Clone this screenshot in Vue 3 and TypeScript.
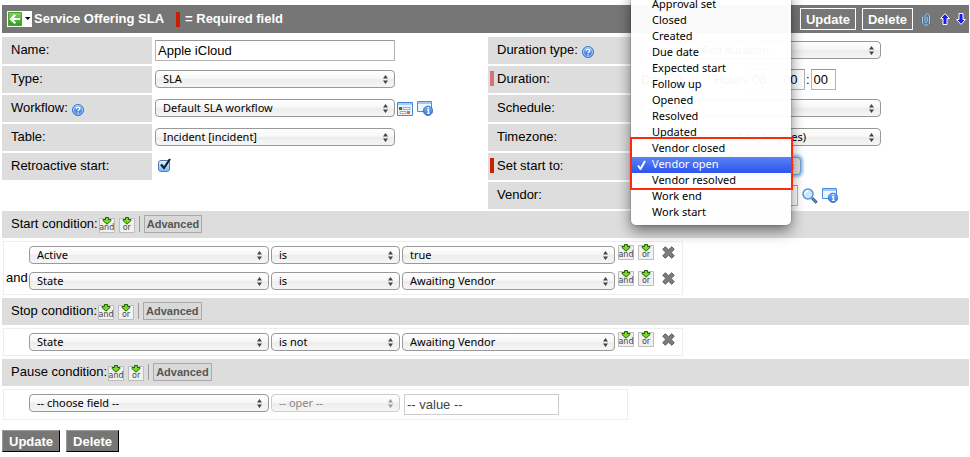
<script setup lang="ts">
import { ref } from 'vue'

interface Condition {
  join: string
  field: string
  oper: string
  value: string
}

interface Section {
  id: string
  title: string
  rows: Condition[]
}

const name = ref('Apple iCloud')
const retroactive = ref(true)
const days = ref('0')
const hours = ref('08')
const minutes = ref('00')
const seconds = ref('00')
const vendor = ref('')
const blankValue = ref('-- value --')
const startTo = ref('Vendor open')

const startOptions: string[] = [
  'Approval set',
  'Closed',
  'Created',
  'Due date',
  'Expected start',
  'Follow up',
  'Opened',
  'Resolved',
  'Updated',
  'Vendor closed',
  'Vendor open',
  'Vendor resolved',
  'Work end',
  'Work start',
]

const sections: Section[] = [
  {
    id: 'start',
    title: 'Start condition:',
    rows: [
      { join: '', field: 'Active', oper: 'is', value: 'true' },
      { join: 'and', field: 'State', oper: 'is', value: 'Awaiting Vendor' },
    ],
  },
  {
    id: 'stop',
    title: 'Stop condition:',
    rows: [{ join: '', field: 'State', oper: 'is not', value: 'Awaiting Vendor' }],
  },
  { id: 'pause', title: 'Pause condition:', rows: [] },
]
</script>

<template>
  <svg class="defs" aria-hidden="true">
    <defs>
      <linearGradient id="g-green" x1="0" y1="0" x2="0" y2="1">
        <stop offset="0" stop-color="#7fd35c" />
        <stop offset="1" stop-color="#2f9e1c" />
      </linearGradient>
      <linearGradient id="g-blue" x1="0" y1="0" x2="0" y2="1">
        <stop offset="0" stop-color="#7db8f5" />
        <stop offset="1" stop-color="#2b6fd8" />
      </linearGradient>
      <symbol id="i-updown" viewBox="0 0 5 9">
        <path d="M2.5 0 5 3.5H0zM2.5 9 0 5.5h5z" fill="currentColor" />
      </symbol>
      <symbol id="i-add" viewBox="0 0 16 16">
        <path d="M.5 1.500h15v14H.5z" fill="#f1f1f1" stroke="#bdbdbd" />
        <path d="M6.500 .5h3v2h2.500v1L8 7.200 4 3.500V2.500h2.500z" fill="#74dc1c" stroke="#235c0c" />
      </symbol>
      <symbol id="i-help" viewBox="0 0 12 12">
        <circle cx="6" cy="6" r="5.500" fill="url(#g-blue)" stroke="#3a74cc" />
        <circle cx="6" cy="6" r="4.500" fill="none" stroke="#b9dcfb" stroke-width=".8" />
        <path d="M4.200 4.700C4.200 2.500 7.900 2.500 7.900 4.600 7.900 5.900 6.100 5.800 6.100 7.300M6.100 8.300v1.300" fill="none" stroke="#fff" stroke-width="1.300" />
      </symbol>
      <symbol id="i-form" viewBox="0 0 16 14">
        <path d="M.5.5h15v13H.5z" fill="#eef5fd" stroke="#3f86dc" />
        <path d="M1 1h14v2H1z" fill="#a9cdf5" />
        <path d="M2 5h3v3H2z" fill="#1e8a1e" />
        <path d="M6 5.500h7v2H6zM3 9.500h6v2H3z" fill="#fff" stroke="#9ab" />
        <path d="M10 9h3v3h-3z" fill="#ff6a00" />
      </symbol>
      <symbol id="i-info" viewBox="0 0 16 15">
        <path d="M.5.5h14v10H.5z" fill="#eef5fd" stroke="#4a8cdf" />
        <path d="M1 1h13v2H1z" fill="#a3c8f4" />
        <circle cx="11" cy="9.800" r="4.700" fill="url(#g-blue)" stroke="#2a66c8" stroke-width=".8" />
        <path d="M10 9h1.500v3M9.800 12.300h3M10.600 6.700h1.300" fill="none" stroke="#fff" stroke-width="1.300" />
      </symbol>
      <symbol id="i-search" viewBox="0 0 16 16">
        <path d="M10 10l4.700 4.700" stroke="#32618f" stroke-width="3" />
        <path d="M10.500 10.500l3.700 3.700" stroke="#7fa9d2" stroke-width="1" />
        <circle cx="6" cy="6" r="5" fill="#c9e8fc" stroke="#5a93cf" stroke-width="1.500" />
        <path d="M3 6a3 3 0 0 1 3-3" fill="none" stroke="#fff" stroke-width="1.500" />
      </symbol>
      <symbol id="i-cross" viewBox="0 0 12 12">
        <path d="M3 .7 6 3.500 9 .7 11.300 3 8.500 6l2.800 3L9 11.300 6 8.500 3 11.300.7 9l2.800-3L.7 3z" fill="#7c7c7c" stroke="#5c5c5c" stroke-width=".9" />
      </symbol>
      <symbol id="i-clip" viewBox="0 0 10 13">
        <path d="M1.500 3.500v5.500c0 4.300 7 4.300 7 0V3C8.500 0 4 0 4 3v5.500c0 1.600 2.200 1.600 2.200 0V4" fill="none" stroke="#3f6d92" stroke-width="1.800" />
        <path d="M1.500 3.500v5.500c0 4.300 7 4.300 7 0V3C8.500 0 4 0 4 3v5.500c0 1.600 2.200 1.600 2.200 0V4" fill="none" stroke="#a9d2ee" stroke-width="1" />
      </symbol>
      <symbol id="i-arrow" viewBox="0 0 10 12">
        <path d="M5 .6 9.400 5.500H7v6H3v-6H.6z" fill="#1c1cf0" stroke="#fff" />
      </symbol>
    </defs>
  </svg>

  <main class="page">
    <header class="bar">
      <button class="back" type="button" aria-label="Back">
        <svg class="back-icon" viewBox="0 0 25 16">
          <path d="M1.500 1.500h13v13h-13z" fill="url(#g-green)" stroke="#42a52c" />
          <path d="M13 8H4.500M8.300 3.800 4 8l4.300 4.200" fill="none" stroke="#fff" stroke-width="2.200" />
          <path d="M18 6h5.500l-2.750 3z" fill="#000" />
        </svg>
      </button>
      <h1 class="title">Service Offering SLA</h1>
      <span class="mark"></span>
      <span class="required">= Required field</span>
      <div class="actions">
        <button class="outline" type="button">Update</button>
        <button class="outline" type="button">Delete</button>
        <button class="icon-btn clip" type="button" aria-label="Attachments">
          <svg width="10" height="13"><use href="#i-clip" /></svg>
        </button>
        <button class="icon-btn" type="button" aria-label="Previous">
          <svg width="10" height="12"><use href="#i-arrow" /></svg>
        </button>
        <button class="icon-btn down" type="button" aria-label="Next">
          <svg width="10" height="12"><use href="#i-arrow" /></svg>
        </button>
      </div>
    </header>

    <div class="form">
      <div class="column">
        <div class="row">
          <div class="label"><label for="name">Name:</label></div>
          <div class="field"><input id="name" v-model="name" class="text wide" type="text" /></div>
        </div>
        <div class="row">
          <div class="label"><label for="type">Type:</label></div>
          <div class="field">
            <span class="select wide"><select id="type"><option>SLA</option></select><svg class="updown"><use href="#i-updown" /></svg></span>
          </div>
        </div>
        <div class="row">
          <div class="label">
            <label for="workflow">Workflow:</label>
            <svg class="help"><use href="#i-help" /></svg>
          </div>
          <div class="field">
            <span class="select wide"><select id="workflow"><option>Default SLA workflow</option></select><svg class="updown"><use href="#i-updown" /></svg></span>
            <div class="tools">
              <button class="icon-btn" type="button" aria-label="Show workflow"><svg width="16" height="14"><use href="#i-form" /></svg></button>
              <button class="icon-btn" type="button" aria-label="Preview workflow"><svg width="16" height="15"><use href="#i-info" /></svg></button>
            </div>
          </div>
        </div>
        <div class="row">
          <div class="label"><label for="table">Table:</label></div>
          <div class="field">
            <span class="select wide"><select id="table"><option>Incident [incident]</option></select><svg class="updown"><use href="#i-updown" /></svg></span>
          </div>
        </div>
        <div class="row">
          <div class="label"><label for="retro">Retroactive start:</label></div>
          <div class="field">
            <span class="check">
              <input id="retro" v-model="retroactive" type="checkbox" />
              <svg v-if="retroactive" class="tick" viewBox="0 0 14 14"><path d="M3 6.500 6 10 12 1" fill="none" stroke="#0b1c3c" stroke-width="2.200" /></svg>
            </span>
          </div>
        </div>
      </div>

      <div class="column">
        <div class="row">
          <div class="label">
            <label for="dtype">Duration type:</label>
            <svg class="help"><use href="#i-help" /></svg>
          </div>
          <div class="field">
            <span class="select wide"><select id="dtype"><option>User specified duration</option></select><svg class="updown"><use href="#i-updown" /></svg></span>
          </div>
        </div>
        <div class="row">
          <div class="label must filled"><label for="days">Duration:</label></div>
          <div class="field duration">
            <span>Days</span>
            <input id="days" v-model="days" class="text digits" type="text" />
            <span class="hours">Hours</span>
            <input v-model="hours" class="text digits" type="text" aria-label="Hours" />
            <span>:</span>
            <input v-model="minutes" class="text digits" type="text" aria-label="Minutes" />
            <span>:</span>
            <input v-model="seconds" class="text digits" type="text" aria-label="Seconds" />
          </div>
        </div>
        <div class="row">
          <div class="label"><label for="schedule">Schedule:</label></div>
          <div class="field">
            <span class="select wide"><select id="schedule"><option>-- None --</option></select><svg class="updown"><use href="#i-updown" /></svg></span>
          </div>
        </div>
        <div class="row">
          <div class="label"><label for="timezone">Timezone:</label></div>
          <div class="field">
            <span class="select wide"><select id="timezone"><option>System (America/Los_Angeles)</option></select><svg class="updown"><use href="#i-updown" /></svg></span>
          </div>
        </div>
        <div class="row">
          <div class="label must"><label for="startto">Set start to:</label></div>
          <div class="field">
            <span class="select narrow focused">
              <select id="startto" v-model="startTo">
                <option v-for="option in startOptions" :key="option">{{ option }}</option>
              </select>
              <svg class="updown"><use href="#i-updown" /></svg>
            </span>
            <div class="menu">
              <ul class="options" role="listbox" aria-label="Set start to">
                <li
                  v-for="option in startOptions"
                  :key="option"
                  class="option"
                  :class="{ chosen: option === startTo }"
                  role="option"
                  :aria-selected="option === startTo"
                  @click="startTo = option"
                >
                  <svg v-if="option === startTo" class="chosen-tick" viewBox="0 0 9 10"><path d="M1 5.500 3.500 9 8 1" fill="none" stroke="#fff" stroke-width="2" /></svg>
                  {{ option }}
                </li>
              </ul>
              <div class="highlight"></div>
            </div>
          </div>
        </div>
        <div class="row">
          <div class="label"><label for="vendor">Vendor:</label></div>
          <div class="field">
            <input id="vendor" v-model="vendor" class="text vendor" type="text" />
            <div class="tools">
              <button class="icon-btn" type="button" aria-label="Look up vendor"><svg width="16" height="16"><use href="#i-search" /></svg></button>
              <button class="icon-btn" type="button" aria-label="Preview vendor"><svg width="16" height="15"><use href="#i-info" /></svg></button>
            </div>
          </div>
        </div>
      </div>
    </div>

    <section v-for="section in sections" :key="section.id" class="section">
      <div class="section-head">
        <h2 class="section-title">{{ section.title }}</h2>
        <div class="adders">
          <button class="add" type="button"><svg class="add-icon"><use href="#i-add" /></svg><span class="add-text">and</span></button>
          <button class="add" type="button"><svg class="add-icon"><use href="#i-add" /></svg><span class="add-text">or</span></button>
        </div>
        <span class="divider"></span>
        <button class="advanced" type="button">Advanced</button>
      </div>

      <div v-if="section.rows.length" class="conditions">
        <div v-for="(row, i) in section.rows" :key="i" class="condition">
          <span class="join">{{ row.join }}</span>
          <span class="select wide"><select aria-label="Field"><option>{{ row.field }}</option></select><svg class="updown"><use href="#i-updown" /></svg></span>
          <span class="select oper"><select aria-label="Operator"><option>{{ row.oper }}</option></select><svg class="updown"><use href="#i-updown" /></svg></span>
          <span class="select value"><select aria-label="Value"><option>{{ row.value }}</option></select><svg class="updown"><use href="#i-updown" /></svg></span>
          <div class="row-tools">
            <button class="add" type="button"><svg class="add-icon"><use href="#i-add" /></svg><span class="add-text">and</span></button>
            <button class="add" type="button"><svg class="add-icon"><use href="#i-add" /></svg><span class="add-text">or</span></button>
            <button class="icon-btn remove" type="button" aria-label="Remove condition"><svg width="13" height="13"><use href="#i-cross" /></svg></button>
          </div>
        </div>
      </div>

      <div v-else class="conditions blank">
        <div class="condition">
          <span class="join"></span>
          <span class="select wide"><select aria-label="Field"><option>-- choose field --</option></select><svg class="updown"><use href="#i-updown" /></svg></span>
          <span class="select oper off"><select aria-label="Operator" disabled><option>-- oper --</option></select><svg class="updown"><use href="#i-updown" /></svg></span>
          <input v-model="blankValue" class="text blank-value" type="text" aria-label="Value" />
        </div>
      </div>
    </section>

    <footer class="footer">
      <button class="solid" type="button">Update</button>
      <button class="solid" type="button">Delete</button>
    </footer>
  </main>
</template>

<style>
body {
  background: #fff;
}
</style>

<style scoped>
.defs {
  position: absolute;
  width: 0;
  height: 0;
}

.page {
  padding: 5px 1px 5px 2px;
  font: 13px/16px "Liberation Sans", Arial, sans-serif;
  color: #000;
}

.page * {
  box-sizing: border-box;
}

button,
input,
select {
  margin: 0;
  font-family: inherit;
}

svg {
  display: block;
  flex: none;
}

.bar {
  display: flex;
  align-items: center;
  height: 28px;
  padding: 0 3px 0 5px;
  background: #767676;
  color: #fff;
  font-weight: bold;
}

.back {
  padding: 0;
  border: 0;
  background: #fff;
}

.back-icon {
  width: 25px;
  height: 16px;
}

.title {
  margin: 0 0 0 2px;
  font-size: 13px;
}

.mark {
  width: 4px;
  height: 15px;
  margin: 0 5px 0 12px;
  background: #c92000;
}

.actions {
  display: flex;
  align-items: center;
  gap: 6px;
  margin-left: auto;
}

.outline {
  height: 22px;
  padding: 0 5px;
  border: 1px solid #fff;
  background: transparent;
  color: #fff;
  font-size: 13px;
  font-weight: bold;
}

.icon-btn {
  padding: 0;
  border: 0;
  background: transparent;
}

.clip {
  margin: 0 3px 0 2px;
}

.down {
  transform: rotate(180deg);
}

.form {
  display: grid;
  grid-template-columns: 1fr 1fr;
  gap: 5px;
  margin-top: 4px;
}

.column {
  display: flex;
  flex-direction: column;
  gap: 2px;
}

.row {
  display: flex;
  gap: 3px;
  height: 27px;
}

.label {
  display: flex;
  flex: none;
  align-items: center;
  gap: 4px;
  width: 150px;
  padding: 0 0 2px 9px;
  background: #ddd;
}

.must {
  padding-left: 2px;
}

.must::before {
  content: "";
  width: 4px;
  height: 15px;
  margin-right: -1px;
  background: #c92000;
}

.filled::before {
  background: #d17575;
}

.help {
  width: 12px;
  height: 12px;
  margin-top: 4px;
}

.field {
  position: relative;
  display: flex;
  flex: 1;
  align-items: center;
}

.tools {
  display: flex;
  align-items: center;
  gap: 4px;
  margin-left: 2px;
}

.vendor + .tools {
  margin-left: 4px;
}

.text {
  height: 21px;
  padding: 0 2px;
  border: 1px solid #b4b4b4;
  border-top-color: #999;
  background: #fff;
  color: #000;
  font-size: 13px;
}

.select {
  position: relative;
  display: block;
  flex: none;
  height: 19px;
}

.select select {
  display: block;
  width: 100%;
  height: 18px;
  padding: 0 16px 0 7px;
  border: 1px solid #999;
  border-radius: 4px;
  appearance: none;
  background: linear-gradient(#fff, #f6f6f6 50%, #ececec 50%, #f6f6f6);
  color: #000;
  font: 11px/16px "Noto Sans", "Open Sans", sans-serif;
  opacity: 1;
}

.updown {
  position: absolute;
  top: 5px;
  right: 7px;
  width: 5px;
  height: 9px;
  color: #444;
  pointer-events: none;
}

.select.off select {
  border-color: #ccc;
  color: #888;
}

.off .updown {
  color: #999;
}

.wide {
  width: 240px;
}

.narrow {
  width: 160px;
}

.select.focused select {
  border-color: #6a9fd4;
  box-shadow: 0 0 3px 2px #8dbbe6;
  background: #ddd;
}

.vendor {
  width: 157px;
}

.digits {
  width: 25px;
}

.duration {
  gap: 1px;
}

.hours {
  margin-left: 16px;
}

.check {
  position: relative;
  margin: 0 0 2px 3px;
}

.check input {
  display: block;
  width: 12px;
  height: 12px;
  border: 1px solid #5379ad;
  border-radius: 3px;
  appearance: none;
  background: linear-gradient(#e2f1ff, #84bdf5);
}

.tick {
  position: absolute;
  top: -2px;
  left: 0;
  width: 14px;
  height: 14px;
  pointer-events: none;
}

.menu {
  position: absolute;
  bottom: -45px;
  left: -10px;
  z-index: 2;
  width: 160px;
  padding: 4px 0;
  border-radius: 0 0 5px 5px;
  background: rgba(255, 255, 255, 0.96);
  box-shadow: 0 6px 14px rgba(0, 0, 0, 0.5), 0 0 2px rgba(0, 0, 0, 0.4);
}

.options {
  margin: 0;
  padding: 0;
  list-style: none;
  font: 11px/14px "Noto Sans", "Open Sans", sans-serif;
}

.option {
  position: relative;
  padding: 0 0 2px 21px;
}

.chosen {
  background: linear-gradient(#5a83f5, #2b55ee);
  color: #fff;
}

.chosen-tick {
  position: absolute;
  top: 3px;
  left: 6px;
  width: 9px;
  height: 10px;
}

.highlight {
  position: absolute;
  right: -2px;
  bottom: 35px;
  left: -1px;
  height: 53px;
  border: 2px solid #fb2a0a;
  pointer-events: none;
}

.section {
  margin-top: 3px;
}

.form + .section {
  margin-top: 2px;
}

.section-head {
  display: flex;
  align-items: center;
  gap: 4px;
  height: 27px;
  padding: 0 0 1px 9px;
  background: #ddd;
}

.section-title {
  margin: 0 -3px 0 0;
  font-size: 13px;
  font-weight: normal;
}

.adders {
  display: flex;
  gap: 4px;
}

.add {
  position: relative;
  flex: none;
  width: 16px;
  height: 16px;
  margin-top: 2px;
  padding: 0;
  border: 0;
  background: transparent;
}

.add-icon {
  width: 16px;
  height: 16px;
}

.add-text {
  position: absolute;
  right: 0;
  bottom: 1px;
  left: 0;
  color: #444;
  font: 8px/8px "DejaVu Sans", sans-serif;
  text-align: center;
}

.divider {
  width: 1px;
  height: 16px;
  background: #999;
}

.advanced {
  height: 18px;
  padding: 0 2px;
  border: 1px solid #aaa;
  background: #d9d9d9;
  color: #555;
  font-size: 11px;
  font-weight: bold;
}

.conditions {
  width: fit-content;
  margin: 3px 0 0 1px;
  padding-right: 7px;
  border: 1px solid #eee;
}

.condition {
  display: flex;
  gap: 2px;
  height: 26px;
  padding-top: 4px;
}

.join {
  width: 23px;
  margin-top: -2px;
  padding-left: 2px;
}

.oper {
  width: 129px;
}

.value {
  width: 213px;
}

.row-tools {
  display: flex;
  align-items: center;
  gap: 4px;
  height: 18px;
  margin: -4px 0 0 1px;
}

.remove {
  margin: 3px 0 0 4px;
}

.blank {
  padding-right: 68px;
}

.blank .condition {
  height: 29px;
}

.blank-value {
  width: 155px;
  margin-left: 2px;
  border-color: #ccc;
  color: #444;
}

.footer {
  display: flex;
  gap: 6px;
  margin-top: 10px;
}

.solid {
  height: 22px;
  padding: 0 6px;
  border: 1px solid #000;
  border-top-color: #999;
  border-left-color: #999;
  background: #767676;
  color: #fff;
  font-size: 13px;
  font-weight: bold;
}
</style>
